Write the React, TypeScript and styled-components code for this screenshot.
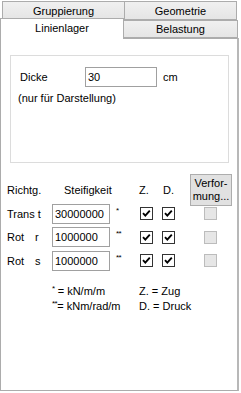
import React from "react";
import styled, { createGlobalStyle } from "styled-components";

const Global = createGlobalStyle`
  html, body { margin: 0; padding: 0; background: #ffffff; }
  body { font-family: "Liberation Sans", Arial, sans-serif; font-size: 11px; color: #000; }
`;

const Root = styled.div`
  width: 241px;
  height: 393px;
  display: flex;
  flex-direction: column;
  overflow: hidden;
`;

const TabRow = styled.div<{ $top?: boolean }>`
  display: flex;
  height: ${(p) => (p.$top ? "19px" : "18px")};
  padding-top: ${(p) => (p.$top ? "1px" : "0")};
  padding-left: ${(p) => (p.$top ? "3px" : "0")};
  position: relative;
`;

const Tab = styled.div<{ $w: number; $selected?: boolean }>`
  width: ${(p) => p.$w}px;
  box-sizing: border-box;
  border: 1px solid #acacac;
  border-bottom: ${(p) => (p.$selected ? "none" : "1px solid #acacac")};
  background: ${(p) => (p.$selected ? "#ffffff" : "linear-gradient(#f0f0f0, #e5e5e5)")};
  display: flex;
  justify-content: center;
  align-items: ${(p) => (p.$selected ? "flex-start" : "center")};
  padding-top: ${(p) => (p.$selected ? "3px" : "0")};
  margin-left: ${(p) => (p.$selected ? "0" : "-1px")};
  ${(p) =>
    p.$selected
      ? `position: relative; z-index: 2; margin-top: -2px; height: 21px; margin-bottom: -1px;`
      : ``}
`;

const Panel = styled.div`
  box-sizing: border-box;
  width: 239px;
  height: 353px;
  border: 1px solid #acacac;
  border-right: 2px solid #b8b8b8;
  background: #fff;
  padding: 16px 0 0 6px;
  display: flex;
  flex-direction: column;
`;

const GroupBox = styled.div`
  box-sizing: border-box;
  width: 219px;
  height: 108px;
  margin-left: 3px;
  border: 1px solid #dcdcdc;
  padding: 11px 0 0 9px;
  display: flex;
  flex-direction: column;
  gap: 3px;
`;

const FieldRow = styled.div`
  display: flex;
  align-items: center;
  height: 20px;
`;

const Label = styled.span<{ $w?: number }>`
  display: inline-block;
  width: ${(p) => (p.$w ? `${p.$w}px` : "auto")};
  white-space: pre;
`;

const Input = styled.div<{ $w: number }>`
  box-sizing: border-box;
  width: ${(p) => p.$w}px;
  height: 20px;
  border: 1px solid #a0a0a0;
  background: #fff;
  padding: 0 0 0 2px;
  display: flex;
  align-items: center;
`;

const Unit = styled.span`
  margin-left: 6px;
`;

const Note = styled.div`
  margin-left: -2px;
  height: 16px;
  display: flex;
  align-items: center;
`;

const Grid = styled.div`
  margin-top: 17px;
  display: grid;
  grid-template-columns: 45px 63px 24px 23px 28px 42px;
  grid-auto-rows: 20px;
  row-gap: 3.5px;
  align-items: center;
`;

const HeaderCell = styled.div<{ $pad?: number }>`
  align-self: center;
  padding-left: ${(p) => p.$pad ?? 0}px;
`;

const HeaderRow = styled.div`
  display: contents;
`;

const Button = styled.div`
  box-sizing: border-box;
  width: 42px;
  height: 32px;
  border: 1px solid #adadad;
  background: #e1e1e1;
  display: flex;
  align-items: center;
  justify-content: center;
  text-align: center;
  line-height: 13px;
  white-space: pre;
`;

const RowLabel = styled.div`
  display: flex;
`;

const Star = styled.span<{ $inline?: boolean }>`
  align-self: start;
  margin-top: ${(p) => (p.$inline ? "0" : "3px")};
  padding-left: ${(p) => (p.$inline ? "0" : "1px")};
  font-size: 8px;
  line-height: 8px;
  letter-spacing: -0.5px;
  vertical-align: ${(p) => (p.$inline ? "4px" : "baseline")};
`;

const BoxWrap = styled.div<{ $pad?: number }>`
  padding-left: ${(p) => p.$pad ?? 0}px;
  display: flex;
  align-items: center;
`;

const Check = styled.span<{ $disabled?: boolean }>`
  box-sizing: border-box;
  width: 13px;
  height: 13px;
  border: 1px solid ${(p) => (p.$disabled ? "#bcbcbc" : "#333333")};
  background: ${(p) => (p.$disabled ? "#e6e6e6" : "#ffffff")};
  display: inline-flex;
  align-items: center;
  justify-content: center;
`;

const Legend = styled.div`
  margin-top: 13px;
  margin-left: 45px;
  display: grid;
  grid-template-columns: 87px auto;
  grid-auto-rows: 15px;
  align-items: center;
`;

const LegendText = styled.span`
  white-space: pre;
`;

const CheckMark = () => (
  <svg width="11" height="11" viewBox="0 0 11 11">
    <path d="M2 5.2 L4.3 7.6 L8.8 2.6" fill="none" stroke="#000" strokeWidth="1.9" />
  </svg>
);

const CheckBox = ({ checked, disabled }: { checked?: boolean; disabled?: boolean }) => (
  <Check $disabled={disabled}>{checked ? <CheckMark /> : null}</Check>
);

const rows = [
  { a: "Trans t", b: "", v: "30000000", star: "*" },
  { a: "Rot", b: "r", v: "1000000", star: "**" },
  { a: "Rot", b: "s", v: "1000000", star: "**" },
];

export default function App() {
  return (
    <Root>
      <Global />
      <TabRow $top>
        <Tab $w={123}>Gruppierung</Tab>
        <Tab $w={113}>Geometrie</Tab>
      </TabRow>
      <TabRow>
        <Tab $w={124} $selected>
          Linienlager
        </Tab>
        <Tab $w={115}>Belastung</Tab>
      </TabRow>
      <Panel>
        <GroupBox>
          <FieldRow>
            <Label $w={65}>Dicke</Label>
            <Input $w={72}>30</Input>
            <Unit>cm</Unit>
          </FieldRow>
          <Note>(nur für Darstellung)</Note>
        </GroupBox>
        <Grid>
          <HeaderRow>
            <HeaderCell>Richtg.</HeaderCell>
            <HeaderCell $pad={12}>Steifigkeit</HeaderCell>
            <HeaderCell />
            <HeaderCell $pad={0}>Z.</HeaderCell>
            <HeaderCell $pad={1}>D.</HeaderCell>
            <HeaderCell>
              <Button>{"Verfor-\nmung..."}</Button>
            </HeaderCell>
          </HeaderRow>
          {rows.map((r, i) => (
            <React.Fragment key={i}>
              <RowLabel>
                <Label $w={r.b ? 28 : undefined}>{r.a}</Label>
                {r.b ? <Label>{r.b}</Label> : null}
              </RowLabel>
              <Input $w={58}>{r.v}</Input>
              <Star>{r.star}</Star>
              <BoxWrap $pad={1}>
                <CheckBox checked />
              </BoxWrap>
              <BoxWrap $pad={0}>
                <CheckBox checked />
              </BoxWrap>
              <BoxWrap $pad={14}>
                <CheckBox disabled />
              </BoxWrap>
            </React.Fragment>
          ))}
        </Grid>
        <Legend>
          <LegendText>
            <Star $inline>*</Star> = kN/m/m
          </LegendText>
          <LegendText>Z. = Zug</LegendText>
          <LegendText>
            <Star $inline>**</Star>= kNm/rad/m
          </LegendText>
          <LegendText>D. = Druck</LegendText>
        </Legend>
      </Panel>
    </Root>
  );
}
